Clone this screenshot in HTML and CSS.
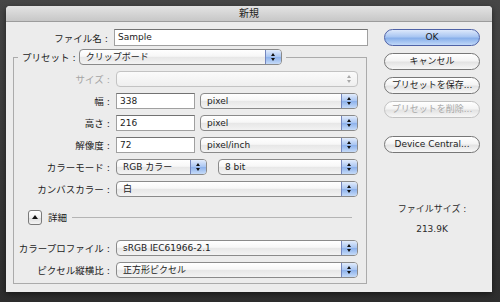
FILE: index.html
```html
<!DOCTYPE html>
<html>
<head>
    <meta charset="utf-8">
    <title>新規</title>
    <link rel="stylesheet" href="styles.css">
</head>
<body>
    <div class="dialog">
        <div class="titlebar">新規</div>
        <div class="content">
            <div class="main">
                <div class="row top">
                    <span class="lbl">ファイル名 :</span>
                    <div class="field name">Sample</div>
                </div>

                <div class="group">
                    <div class="legend">
                        <span class="lbl-preset">プリセット :</span>
                        <div class="popup preset"><span class="val">クリップボード</span><span class="arr"></span></div>
                    </div>

                    <div class="rows">
                        <div class="row">
                            <span class="lbl off-text">サイズ :</span>
                            <div class="popup off wide"><span class="val"></span><span class="arr"></span></div>
                        </div>
                        <div class="row">
                            <span class="lbl">幅 :</span>
                            <div class="field num">338</div>
                            <div class="popup unit"><span class="val">pixel</span><span class="arr"></span></div>
                        </div>
                        <div class="row">
                            <span class="lbl">高さ :</span>
                            <div class="field num">216</div>
                            <div class="popup unit"><span class="val">pixel</span><span class="arr"></span></div>
                        </div>
                        <div class="row">
                            <span class="lbl">解像度 :</span>
                            <div class="field num">72</div>
                            <div class="popup unit"><span class="val">pixel/inch</span><span class="arr"></span></div>
                        </div>
                        <div class="row">
                            <span class="lbl">カラーモード :</span>
                            <div class="popup mode"><span class="val">RGB カラー</span><span class="arr"></span></div>
                            <div class="popup bits"><span class="val">8 bit</span><span class="arr"></span></div>
                        </div>
                        <div class="row">
                            <span class="lbl">カンバスカラー :</span>
                            <div class="popup wide"><span class="val">白</span><span class="arr"></span></div>
                        </div>

                        <div class="row disc">
                            <span class="disc-btn"></span>
                            <span class="disc-text">詳細</span>
                            <span class="disc-line"></span>
                        </div>

                        <div class="row after-disc">
                            <span class="lbl">カラープロファイル :</span>
                            <div class="popup wide"><span class="val">sRGB IEC61966-2.1</span><span class="arr"></span></div>
                        </div>
                        <div class="row">
                            <span class="lbl">ピクセル縦横比 :</span>
                            <div class="popup wide"><span class="val">正方形ピクセル</span><span class="arr"></span></div>
                        </div>
                    </div>
                </div>
            </div>

            <div class="side">
                <div class="btn default">OK</div>
                <div class="btn">キャンセル</div>
                <div class="btn">プリセットを保存...</div>
                <div class="btn off">プリセットを削除...</div>
                <div class="btn device">Device Central...</div>

                <div class="info">ファイルサイズ :</div>
                <div class="info size">213.9K</div>
            </div>
        </div>
    </div>
</body>
</html>
```

FILE: styles.css
```css
body {
    margin: 0;
    padding: 6px;
    width: 500px;
    height: 302px;
    box-sizing: border-box;
    background: linear-gradient(#464646, #2e2e2e);
    font-family: "DejaVu Sans", "Noto Sans CJK JP", sans-serif;
    font-size: 9px;
    color: #1c1c1c;
    overflow: hidden;
}

.dialog {
    width: 486px;
    height: 286px;
    background-color: #ececec;
    border-radius: 4px 4px 0 0;
    overflow: hidden;
    box-shadow: 0 2px 6px rgba(0, 0, 0, 0.5);
}

.titlebar {
    height: 16px;
    line-height: 15px;
    box-sizing: border-box;
    text-align: center;
    font-size: 10px;
    color: #222222;
    background: linear-gradient(#e3e3e3, #c7c7c7);
    border-bottom: 1px solid #9c9c9c;
}

.content {
    display: flex;
    padding-top: 7px;
}

.main {
    width: 362px;
}

.row {
    display: flex;
    align-items: center;
    height: 16px;
}

.row.top {
    height: 17px;
}

.lbl {
    flex: none;
    width: 102px;
    padding-right: 6px;
    box-sizing: border-box;
    text-align: right;
    white-space: nowrap;
    font-size: 9.5px;
}

.lbl-preset {
    font-size: 9.5px;
}

.row.top .lbl {
    width: 108px;
}

.off-text {
    color: #a4a4a4;
}

/* text fields */
.field {
    height: 16px;
    box-sizing: border-box;
    border: 1px solid #a0a0a0;
    border-top-color: #727272;
    background-color: #ffffff;
    padding-left: 3px;
    line-height: 14px;
}

.field.name {
    width: 254px;
    height: 17px;
    line-height: 15px;
}

.field.num {
    width: 79px;
    margin-right: 5px;
}

/* preset group */
.group {
    margin: 11px 0 0 7px;
    width: 354px;
    box-sizing: border-box;
    border: 1px solid #ababab;
    padding: 0 8px 5px 0;
}

.legend {
    display: flex;
    align-items: center;
    gap: 3px;
    width: fit-content;
    height: 16px;
    margin: -9px 0 0 4px;
    padding: 0 4px;
    background-color: #ececec;
}

.rows {
    display: flex;
    flex-direction: column;
    gap: 6px;
    margin-top: 6px;
}

/* popup menus */
.popup {
    display: flex;
    height: 16px;
    box-sizing: border-box;
    border: 1px solid #8a8a8a;
    border-radius: 4px;
    overflow: hidden;
    background: linear-gradient(#ffffff 0%, #f7f7f7 45%, #e7e7e7 52%, #f3f3f3 100%);
}

.popup .val {
    flex: 1;
    padding-left: 6px;
    line-height: 14px;
    white-space: nowrap;
    overflow: hidden;
}

.popup .arr {
    position: relative;
    flex: none;
    width: 15px;
    border-left: 1px solid #7486bd;
    background: linear-gradient(#e2ecfc, #aac6f2 48%, #8db2ec 52%, #c6dbf8);
}

.popup .arr::before,
.popup .arr::after {
    content: "";
    position: absolute;
    left: 5px;
    border-left: 2px solid transparent;
    border-right: 2px solid transparent;
}

.popup .arr::before {
    top: 3px;
    border-bottom: 3px solid #111111;
}

.popup .arr::after {
    top: 8px;
    border-top: 3px solid #111111;
}

.popup.preset {
    width: 203px;
}

.popup.wide {
    width: 242px;
}

.popup.unit {
    width: 158px;
}

.popup.mode {
    width: 91px;
    margin-right: 11px;
}

.popup.bits {
    width: 140px;
}

.popup.off {
    border-color: #c3c3c3;
    background: linear-gradient(#fbfbfb, #efefef);
}

.popup.off .arr {
    background: none;
    border-left: none;
}

.popup.off .arr::before {
    border-bottom-color: #a8a8a8;
}

.popup.off .arr::after {
    border-top-color: #a8a8a8;
}

/* disclosure */
.row.disc {
    margin-top: 6px;
}

.disc-btn {
    position: relative;
    flex: none;
    width: 14px;
    height: 15px;
    margin-left: 14px;
    box-sizing: border-box;
    border: 1px solid #7a7a7a;
    border-radius: 3px;
    background: linear-gradient(#ffffff, #f0f0f0 50%, #dedede 55%, #f4f4f4);
}

.disc-btn::before {
    content: "";
    position: absolute;
    left: 3px;
    top: 4px;
    border-left: 3px solid transparent;
    border-right: 3px solid transparent;
    border-bottom: 4px solid #111111;
}

.disc-text {
    margin-left: 6px;
    font-size: 9.5px;
}

.disc-line {
    flex: 1;
    height: 1px;
    margin: 0 6px 0 5px;
    background-color: #b4b4b4;
}

.row.after-disc {
    margin-top: 9px;
}

/* right column */
.side {
    width: 96px;
    margin-left: 16px;
    display: flex;
    flex-direction: column;
}

.btn {
    height: 17px;
    box-sizing: border-box;
    margin-bottom: 7px;
    border: 1px solid #777777;
    border-radius: 9px;
    text-align: center;
    line-height: 15px;
    white-space: nowrap;
    background: linear-gradient(#ffffff, #f4f4f4 45%, #e3e3e3 55%, #f7f7f7);
}

.btn.default {
    border-color: #4f62a6;
    background: linear-gradient(#dde8fb, #a9c6f2 45%, #88afea 55%, #c0d8f8);
}

.btn.off {
    color: #a8a8a8;
    border-color: #c2c2c2;
}

.btn.device {
    margin-top: 11px;
}

.info {
    margin-top: 43px;
    text-align: center;
    line-height: 12px;
    color: #2a2a2a;
}

.info.size {
    margin-top: 8px;
}
```
